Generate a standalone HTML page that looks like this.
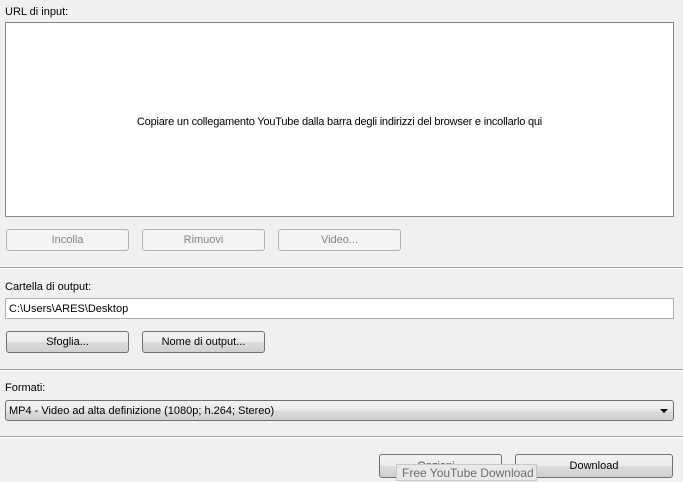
<!DOCTYPE html>
<html><head><style>
body{margin:0;width:683px;height:481px;background:#f0f0f0;font-family:"Liberation Sans",sans-serif;font-size:11px;color:#000;position:relative;overflow:hidden}
.a{position:absolute}
.lbl{position:absolute;left:5px}
.box{position:absolute;background:#fff;border:1px solid #abadb3;box-sizing:border-box}
.btn{position:absolute;box-sizing:border-box;border:1px solid #707070;border-radius:3px;background:linear-gradient(#f2f2f2 0%,#ebebeb 50%,#dddddd 51%,#cfcfcf 100%);text-align:center;font-size:11px}
.dis{border-color:#adb2b5;background:#f4f4f4;color:#838383}
.sep{position:absolute;left:0;width:683px;height:1px;background:#a0a0a0;border-bottom:1px solid #fff}
</style></head><body>
<div class="lbl" style="top:6px">URL di input:</div>
<div class="box" style="left:5px;top:22px;width:669px;height:195px;border-color:#828790"><div style="position:absolute;top:93px;width:100%;text-align:center;letter-spacing:-0.2px">Copiare un collegamento YouTube dalla barra degli indirizzi del browser e incollarlo qui</div></div>
<div class="btn dis" style="left:6px;top:229px;width:123px;height:22px;line-height:21px">Incolla</div>
<div class="btn dis" style="left:142px;top:229px;width:123px;height:22px;line-height:21px">Rimuovi</div>
<div class="btn dis" style="left:278px;top:229px;width:123px;height:22px;line-height:21px">Video...</div>
<div class="sep" style="top:267px"></div>
<div class="lbl" style="top:281px">Cartella di output:</div>
<div class="box" style="left:5px;top:298px;width:669px;height:21px;padding:4px 0 0 3px">C:\Users\ARES\Desktop</div>
<div class="btn" style="left:6px;top:331px;width:123px;height:22px;line-height:21px">Sfoglia...</div>
<div class="btn" style="left:142px;top:331px;width:123px;height:22px;line-height:21px">Nome di output...</div>
<div class="sep" style="top:369px"></div>
<div class="lbl" style="top:382px">Formati:</div>
<div class="btn" style="left:5px;top:400px;width:669px;height:21px;line-height:20px;text-align:left;padding-left:3px">MP4 - Video ad alta definizione (1080p; h.264; Stereo)<span class="a" style="right:5px;top:8px;width:0;height:0;border-left:4px solid transparent;border-right:4px solid transparent;border-top:4px solid #000"></span></div>
<div class="sep" style="top:436px"></div>
<div class="btn" style="left:379px;top:454px;width:123px;height:24px;line-height:23px;color:#555">Opzioni...</div>
<div class="btn" style="left:515px;top:454px;width:158px;height:24px;line-height:23px">Download</div>
<div class="a" style="left:396px;top:464px;width:141px;height:17px;background:#e8e8e8;border:1px solid #c8c8c8;box-sizing:border-box;color:#6d6d6d;font-size:12px;line-height:17px;padding-left:5px">Free YouTube Download</div>
</body></html>
